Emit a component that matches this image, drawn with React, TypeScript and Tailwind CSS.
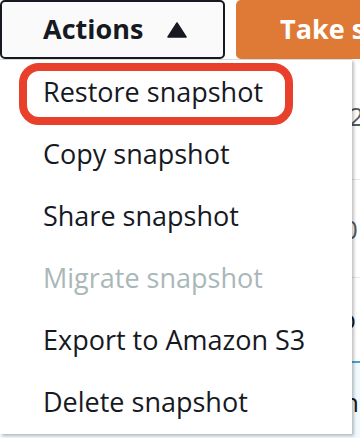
import { useState } from "react";

const items = [
  { label: "Restore snapshot", disabled: false },
  { label: "Copy snapshot", disabled: false },
  { label: "Share snapshot", disabled: false },
  { label: "Migrate snapshot", disabled: true },
  { label: "Export to Amazon S3", disabled: false },
  { label: "Delete snapshot", disabled: false },
];

export default function App() {
  const [open] = useState(true);

  return (
    <div
      className="relative h-[438px] w-[360px] overflow-hidden bg-white text-[#16191f]"
      style={{ fontFamily: '"Open Sans", "Liberation Sans", Arial, sans-serif' }}
    >
      {/* Header buttons */}
      <div className="flex h-[59px] gap-[11px]">
        <button className="flex w-[225px] shrink-0 items-center rounded-[5px] border-2 border-[#16191f] bg-[#fafafa] pl-[41px] text-[27px] font-bold">
          Actions
          <svg viewBox="0 0 20 16" className="ml-[24px] h-[16px] w-[20px]">
            <path d="M10 1 L19 15 L1 15 Z" fill="#16191f" stroke="#16191f" strokeWidth="1.5" strokeLinejoin="round" />
          </svg>
        </button>
        <button className="flex flex-1 items-center whitespace-nowrap rounded-l-[5px] bg-[#df7a36] pl-[44px] text-[27px] font-bold text-white">
          Take snapshot
        </button>
      </div>

      {/* Table behind the menu */}
      <div className="text-[26px] text-[#545b64]">
        <div className="h-[121px] border-b border-[#e4e8e8] pl-[349px] pt-[42px] leading-[30px]">2</div>
        <div className="h-[98px] border-b border-[#e4e8e8] pl-[343px] pt-[34px] leading-[30px]">0</div>
        <div className="h-[83px] pl-[340px] pt-[26px] leading-[30px] text-[#16191f]">p</div>
        <div className="h-[77px] border-t-2 border-[#4aa3d6] bg-[#f1faff] pl-[343px] pt-[24px] leading-[30px] text-[#16191f]">n</div>
      </div>

      {/* Dropdown menu */}
      {open && (
        <ul className="absolute left-0 top-[59px] w-[352px] border-t border-[#d5dbdb] bg-white pt-[2px] shadow-[2px_2px_3px_rgba(0,0,0,0.25)]">
          {items.map((item, i) => (
            <li
              key={item.label}
              className={`relative h-[62px] pl-[43px] text-[27px] leading-[60px] ${
                item.disabled ? "text-[#aab7b8]" : "text-[#16191f]"
              }`}
            >
              {i === 0 && (
                <span className="absolute left-[19px] top-[1px] h-[62px] w-[274px] rounded-[20px] border-[8px] border-[#e8402a]" />
              )}
              <span className="relative">{item.label}</span>
            </li>
          ))}
        </ul>
      )}
    </div>
  );
}
